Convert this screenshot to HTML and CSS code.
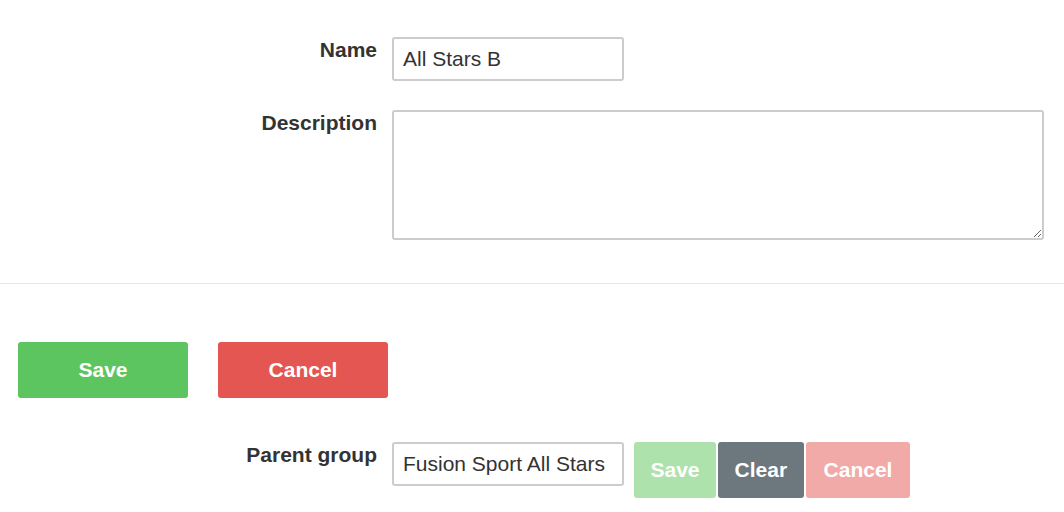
FILE: index.html
```html
<!DOCTYPE html>
<html lang="en">

<head>
    <meta charset="UTF-8">
    <meta name="viewport" content="width=device-width, initial-scale=1.0">
    <title>Edit Group</title>
    <link rel="stylesheet" href="styles.css">
</head>

<body>
    <form class="group-form">
        <div class="row">
            <label class="label" for="name">Name</label>
            <input class="field" id="name" type="text" value="All Stars B">
        </div>
        <div class="row">
            <label class="label" for="description">Description</label>
            <textarea class="field area" id="description"></textarea>
        </div>
    </form>

    <hr class="divider">

    <div class="actions">
        <button class="btn btn-save">Save</button>
        <button class="btn btn-cancel">Cancel</button>
    </div>

    <div class="row parent">
        <label class="label" for="parent">Parent group</label>
        <input class="field" id="parent" type="text" value="Fusion Sport All Stars">
        <div class="mini-actions">
            <button class="mini mini-save">Save</button>
            <button class="mini mini-clear">Clear</button>
            <button class="mini mini-cancel">Cancel</button>
        </div>
    </div>
</body>

</html>
```

FILE: styles.css
```css
body {
    margin: 0;
    font-family: "Liberation Sans", Arial, sans-serif;
    color: #333;
    background: #fff;
}

.group-form {
    padding-top: 37px;
}

.row {
    display: flex;
    align-items: flex-start;
    margin-bottom: 29px;
}

.label {
    box-sizing: border-box;
    width: 392px;
    padding-right: 15px;
    text-align: right;
    font-size: 21px;
    font-weight: bold;
    line-height: 25px;
}

.field {
    box-sizing: border-box;
    width: 232px;
    height: 44px;
    padding: 0 9px;
    border: 2px solid #ccc;
    border-radius: 3px;
    font-family: "Liberation Sans", Arial, sans-serif;
    font-size: 21px;
    color: #333;
    background: #fff;
}

.area {
    width: 652px;
    height: 130px;
    padding: 10px;
}

.group-form .row:last-child {
    margin-bottom: 0;
}

.divider {
    margin: 43px 0 0;
    border: 0;
    border-top: 1px solid #e8e8e8;
}

.actions {
    display: flex;
    gap: 30px;
    padding: 58px 0 0 18px;
    margin-bottom: 44px;
}

.btn {
    width: 170px;
    height: 56px;
    border: 0;
    border-radius: 3px;
    color: #fff;
    font-family: "Liberation Sans", Arial, sans-serif;
    font-size: 21px;
    font-weight: bold;
}

.btn-save {
    background: #5cc55f;
}

.btn-cancel {
    background: #e35651;
}

.parent .field {
    margin-right: 10px;
}

.mini-actions {
    display: flex;
    gap: 2px;
}

.mini {
    height: 56px;
    padding: 0 16.5px;
    border: 0;
    border-radius: 3px;
    color: #fff;
    font-family: "Liberation Sans", Arial, sans-serif;
    font-size: 21px;
    font-weight: bold;
}

.mini-save {
    background: #aee2ac;
}

.mini-clear {
    background: #6c787e;
}

.mini-cancel {
    background: #f1aaa8;
    padding: 0 18px;
}
```
